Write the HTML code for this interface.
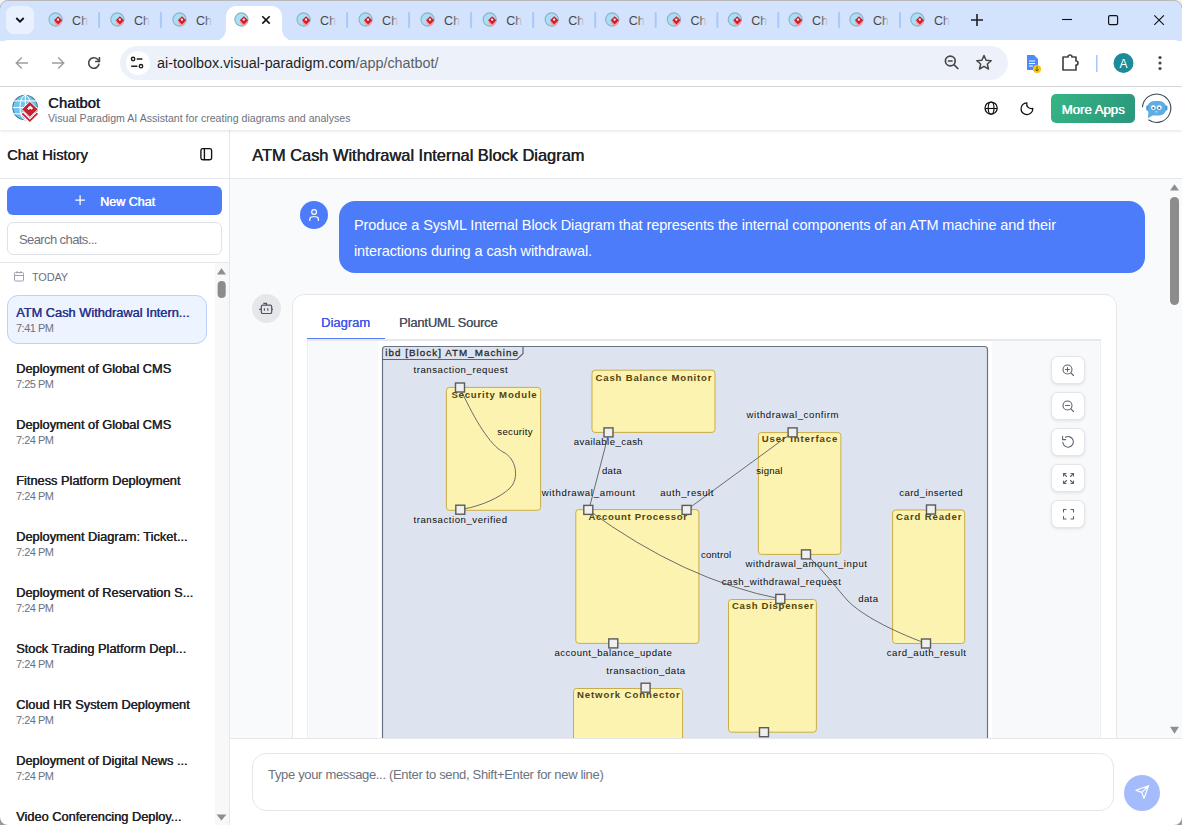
<!DOCTYPE html>
<html><head><meta charset="utf-8">
<style>
*{box-sizing:border-box}
html,body{margin:0;padding:0}
body{width:1182px;height:825px;overflow:hidden;position:relative;font-family:"Liberation Sans",sans-serif;background:#fff;color:#1f2328}
.a{position:absolute}
.tabstrip{left:0;top:0;width:1182px;height:41px;background:#d3e3fd}
.tabtxt{font-size:12px;color:#3c4043;top:14px}
.sep{top:12px;width:2px;height:17px;background:#a8c7fa;border-radius:1px}
.toolbar{left:0;top:40px;width:1182px;height:47px;background:#fff;border-bottom:1px solid #dadce0;border-radius:8px 8px 0 0}
.omni{left:120px;top:46px;width:888px;height:34px;border-radius:17px;background:#edf2fa}
.url{left:157px;top:55px;font-size:14.35px;color:#1f1f1f;letter-spacing:0px}
.apphdr{left:0;top:87px;width:1182px;height:43px;background:#fff;box-shadow:0 1px 3px rgba(0,0,0,.12);z-index:2}
.side{left:0;top:130px;width:230px;height:695px;background:#fff;border-right:1px solid #e5e7eb}
.item{left:16px;font-size:12.8px;color:#1f2328;text-shadow:0.45px 0 0 #1f2328}
.time{left:16px;font-size:11px;color:#6b7280;letter-spacing:-0.5px}
.main{left:230px;top:130px;width:952px;height:695px;background:#f9fafb}
.zbtn{left:1051px;width:34px;height:28px;background:#fff;border:1px solid #e3e5e9;border-radius:7px;box-shadow:0 1px 3px rgba(0,0,0,.1)}
</style></head>
<body>
<!-- TAB STRIP -->
<div class="a tabstrip"></div>
<div class="a" style="left:6px;top:6px;width:28px;height:28px;border-radius:8px;background:#eaf1fe"></div>
<svg class="a" style="left:0;top:0" width="1182" height="41">
  <path d="M16.3 18 L20 21.7 L23.7 18" fill="none" stroke="#111" stroke-width="1.8"/>
</svg>
<svg class="a" style="left:0;top:0" width="1182" height="41"><path d="M214 41 A12 12 0 0 0 226 29 V16 A10 10 0 0 1 236 6 H272 A10 10 0 0 1 282 16 V29 A12 12 0 0 0 294 41 Z" fill="#fff"/></svg>
<!--tabs--><svg class="a" style="left:0;top:0" width="1182" height="41">
<defs><linearGradient id="fade" x1="0" x2="1"><stop offset="0" stop-color="#474747"/><stop offset="0.55" stop-color="#474747"/><stop offset="1" stop-color="#474747" stop-opacity="0"/></linearGradient></defs>
<g transform="translate(55.60,19.5)">
<circle r="6.6" fill="#a8dff6" stroke="#8eb0c0" stroke-width="1.1"/>
<polygon points="2.5,-1 6.6,3.1 2.5,7.2 -1.6,3.1" fill="#f09ea5"/>
<polygon points="2.5,-3.3 6.6,0.8 2.5,4.9 -1.6,0.8" fill="#d21c2c"/>
<circle cx="2.4" cy="0.2" r="1.15" fill="#fff"/>
</g>
<text x="72.1" y="25" font-size="12.5" fill="url(#fade)" font-family="Liberation Sans" textLength="16">Ch</text>
<rect x="98.1" y="12" width="2" height="16" rx="1" fill="#a8c7fa"/>
<g transform="translate(117.40,19.5)">
<circle r="6.6" fill="#a8dff6" stroke="#8eb0c0" stroke-width="1.1"/>
<polygon points="2.5,-1 6.6,3.1 2.5,7.2 -1.6,3.1" fill="#f09ea5"/>
<polygon points="2.5,-3.3 6.6,0.8 2.5,4.9 -1.6,0.8" fill="#d21c2c"/>
<circle cx="2.4" cy="0.2" r="1.15" fill="#fff"/>
</g>
<text x="133.9" y="25" font-size="12.5" fill="url(#fade)" font-family="Liberation Sans" textLength="16">Ch</text>
<rect x="159.9" y="12" width="2" height="16" rx="1" fill="#a8c7fa"/>
<g transform="translate(179.50,19.5)">
<circle r="6.6" fill="#a8dff6" stroke="#8eb0c0" stroke-width="1.1"/>
<polygon points="2.5,-1 6.6,3.1 2.5,7.2 -1.6,3.1" fill="#f09ea5"/>
<polygon points="2.5,-3.3 6.6,0.8 2.5,4.9 -1.6,0.8" fill="#d21c2c"/>
<circle cx="2.4" cy="0.2" r="1.15" fill="#fff"/>
</g>
<text x="196.0" y="25" font-size="12.5" fill="url(#fade)" font-family="Liberation Sans" textLength="16">Ch</text>
<g transform="translate(241.40,19.5)">
<circle r="6.6" fill="#a8dff6" stroke="#8eb0c0" stroke-width="1.1"/>
<polygon points="2.5,-1 6.6,3.1 2.5,7.2 -1.6,3.1" fill="#f09ea5"/>
<polygon points="2.5,-3.3 6.6,0.8 2.5,4.9 -1.6,0.8" fill="#d21c2c"/>
<circle cx="2.4" cy="0.2" r="1.15" fill="#fff"/>
</g>
<path d="M262.3 16.2 L269.7 23.6 M269.7 16.2 L262.3 23.6" stroke="#111" stroke-width="1.6"/>
<g transform="translate(303.60,19.5)">
<circle r="6.6" fill="#a8dff6" stroke="#8eb0c0" stroke-width="1.1"/>
<polygon points="2.5,-1 6.6,3.1 2.5,7.2 -1.6,3.1" fill="#f09ea5"/>
<polygon points="2.5,-3.3 6.6,0.8 2.5,4.9 -1.6,0.8" fill="#d21c2c"/>
<circle cx="2.4" cy="0.2" r="1.15" fill="#fff"/>
</g>
<text x="320.1" y="25" font-size="12.5" fill="url(#fade)" font-family="Liberation Sans" textLength="16">Ch</text>
<rect x="346.1" y="12" width="2" height="16" rx="1" fill="#a8c7fa"/>
<g transform="translate(365.60,19.5)">
<circle r="6.6" fill="#a8dff6" stroke="#8eb0c0" stroke-width="1.1"/>
<polygon points="2.5,-1 6.6,3.1 2.5,7.2 -1.6,3.1" fill="#f09ea5"/>
<polygon points="2.5,-3.3 6.6,0.8 2.5,4.9 -1.6,0.8" fill="#d21c2c"/>
<circle cx="2.4" cy="0.2" r="1.15" fill="#fff"/>
</g>
<text x="382.1" y="25" font-size="12.5" fill="url(#fade)" font-family="Liberation Sans" textLength="16">Ch</text>
<rect x="408.1" y="12" width="2" height="16" rx="1" fill="#a8c7fa"/>
<g transform="translate(427.60,19.5)">
<circle r="6.6" fill="#a8dff6" stroke="#8eb0c0" stroke-width="1.1"/>
<polygon points="2.5,-1 6.6,3.1 2.5,7.2 -1.6,3.1" fill="#f09ea5"/>
<polygon points="2.5,-3.3 6.6,0.8 2.5,4.9 -1.6,0.8" fill="#d21c2c"/>
<circle cx="2.4" cy="0.2" r="1.15" fill="#fff"/>
</g>
<text x="444.1" y="25" font-size="12.5" fill="url(#fade)" font-family="Liberation Sans" textLength="16">Ch</text>
<rect x="470.1" y="12" width="2" height="16" rx="1" fill="#a8c7fa"/>
<g transform="translate(489.70,19.5)">
<circle r="6.6" fill="#a8dff6" stroke="#8eb0c0" stroke-width="1.1"/>
<polygon points="2.5,-1 6.6,3.1 2.5,7.2 -1.6,3.1" fill="#f09ea5"/>
<polygon points="2.5,-3.3 6.6,0.8 2.5,4.9 -1.6,0.8" fill="#d21c2c"/>
<circle cx="2.4" cy="0.2" r="1.15" fill="#fff"/>
</g>
<text x="506.2" y="25" font-size="12.5" fill="url(#fade)" font-family="Liberation Sans" textLength="16">Ch</text>
<rect x="532.2" y="12" width="2" height="16" rx="1" fill="#a8c7fa"/>
<g transform="translate(551.70,19.5)">
<circle r="6.6" fill="#a8dff6" stroke="#8eb0c0" stroke-width="1.1"/>
<polygon points="2.5,-1 6.6,3.1 2.5,7.2 -1.6,3.1" fill="#f09ea5"/>
<polygon points="2.5,-3.3 6.6,0.8 2.5,4.9 -1.6,0.8" fill="#d21c2c"/>
<circle cx="2.4" cy="0.2" r="1.15" fill="#fff"/>
</g>
<text x="568.2" y="25" font-size="12.5" fill="url(#fade)" font-family="Liberation Sans" textLength="16">Ch</text>
<rect x="594.2" y="12" width="2" height="16" rx="1" fill="#a8c7fa"/>
<g transform="translate(612.20,19.5)">
<circle r="6.6" fill="#a8dff6" stroke="#8eb0c0" stroke-width="1.1"/>
<polygon points="2.5,-1 6.6,3.1 2.5,7.2 -1.6,3.1" fill="#f09ea5"/>
<polygon points="2.5,-3.3 6.6,0.8 2.5,4.9 -1.6,0.8" fill="#d21c2c"/>
<circle cx="2.4" cy="0.2" r="1.15" fill="#fff"/>
</g>
<text x="628.7" y="25" font-size="12.5" fill="url(#fade)" font-family="Liberation Sans" textLength="16">Ch</text>
<rect x="654.7" y="12" width="2" height="16" rx="1" fill="#a8c7fa"/>
<g transform="translate(673.90,19.5)">
<circle r="6.6" fill="#a8dff6" stroke="#8eb0c0" stroke-width="1.1"/>
<polygon points="2.5,-1 6.6,3.1 2.5,7.2 -1.6,3.1" fill="#f09ea5"/>
<polygon points="2.5,-3.3 6.6,0.8 2.5,4.9 -1.6,0.8" fill="#d21c2c"/>
<circle cx="2.4" cy="0.2" r="1.15" fill="#fff"/>
</g>
<text x="690.4" y="25" font-size="12.5" fill="url(#fade)" font-family="Liberation Sans" textLength="16">Ch</text>
<rect x="716.4" y="12" width="2" height="16" rx="1" fill="#a8c7fa"/>
<g transform="translate(734.80,19.5)">
<circle r="6.6" fill="#a8dff6" stroke="#8eb0c0" stroke-width="1.1"/>
<polygon points="2.5,-1 6.6,3.1 2.5,7.2 -1.6,3.1" fill="#f09ea5"/>
<polygon points="2.5,-3.3 6.6,0.8 2.5,4.9 -1.6,0.8" fill="#d21c2c"/>
<circle cx="2.4" cy="0.2" r="1.15" fill="#fff"/>
</g>
<text x="751.3" y="25" font-size="12.5" fill="url(#fade)" font-family="Liberation Sans" textLength="16">Ch</text>
<rect x="777.3" y="12" width="2" height="16" rx="1" fill="#a8c7fa"/>
<g transform="translate(795.60,19.5)">
<circle r="6.6" fill="#a8dff6" stroke="#8eb0c0" stroke-width="1.1"/>
<polygon points="2.5,-1 6.6,3.1 2.5,7.2 -1.6,3.1" fill="#f09ea5"/>
<polygon points="2.5,-3.3 6.6,0.8 2.5,4.9 -1.6,0.8" fill="#d21c2c"/>
<circle cx="2.4" cy="0.2" r="1.15" fill="#fff"/>
</g>
<text x="812.1" y="25" font-size="12.5" fill="url(#fade)" font-family="Liberation Sans" textLength="16">Ch</text>
<rect x="838.1" y="12" width="2" height="16" rx="1" fill="#a8c7fa"/>
<g transform="translate(856.50,19.5)">
<circle r="6.6" fill="#a8dff6" stroke="#8eb0c0" stroke-width="1.1"/>
<polygon points="2.5,-1 6.6,3.1 2.5,7.2 -1.6,3.1" fill="#f09ea5"/>
<polygon points="2.5,-3.3 6.6,0.8 2.5,4.9 -1.6,0.8" fill="#d21c2c"/>
<circle cx="2.4" cy="0.2" r="1.15" fill="#fff"/>
</g>
<text x="873.0" y="25" font-size="12.5" fill="url(#fade)" font-family="Liberation Sans" textLength="16">Ch</text>
<rect x="899.0" y="12" width="2" height="16" rx="1" fill="#a8c7fa"/>
<g transform="translate(917.40,19.5)">
<circle r="6.6" fill="#a8dff6" stroke="#8eb0c0" stroke-width="1.1"/>
<polygon points="2.5,-1 6.6,3.1 2.5,7.2 -1.6,3.1" fill="#f09ea5"/>
<polygon points="2.5,-3.3 6.6,0.8 2.5,4.9 -1.6,0.8" fill="#d21c2c"/>
<circle cx="2.4" cy="0.2" r="1.15" fill="#fff"/>
</g>
<text x="933.9" y="25" font-size="12.5" fill="url(#fade)" font-family="Liberation Sans" textLength="16">Ch</text>
</svg><!--/tabs-->
<!-- TOOLBAR -->
<div class="a toolbar"></div>
<div class="a omni"></div>
<div class="a" style="left:126px;top:51px;width:24px;height:24px;border-radius:12px;background:#fff"></div>
<div class="a url">ai-toolbox.visual-paradigm.com<span style="color:#5b5f63">/app/chatbot/</span></div>
<svg class="a" style="left:0;top:40px" width="1182" height="46">
  <!-- back -->
  <path d="M28 23 H16.5 M21.8 17.5 L16.3 23 L21.8 28.5" fill="none" stroke="#9aa0a6" stroke-width="1.5"/>
  <!-- forward -->
  <path d="M52 23 H63.5 M58.2 17.5 L63.7 23 L58.2 28.5" fill="none" stroke="#9aa0a6" stroke-width="1.5"/>
  <!-- reload -->
  <path d="M99.1 23.7 A5.25 5.25 0 1 1 97.6 19.3 L99.2 21.2" fill="none" stroke="#474747" stroke-width="1.6"/>
  <path d="M99.4 17 V21.5 H95.1" fill="none" stroke="#474747" stroke-width="1.6"/>
  <!-- site info -->
  <path d="M136.7 19 H142.4 M131.2 26.2 H137.4" stroke="#1f1f1f" stroke-width="1.6"/>
  <circle cx="133.1" cy="19" r="1.7" fill="none" stroke="#1f1f1f" stroke-width="1.4"/>
  <circle cx="141" cy="26.2" r="1.7" fill="none" stroke="#1f1f1f" stroke-width="1.4"/>
  <!-- zoom -->
  <circle cx="950.3" cy="21" r="4.9" fill="none" stroke="#474747" stroke-width="1.7"/>
  <path d="M953.9 24.6 L958.3 29 M947.9 21 H952.7" stroke="#474747" stroke-width="1.7"/>
  <!-- star -->
  <path d="M984 15.5 L986.1 20.3 L991.2 20.7 L987.3 24 L988.5 29 L984 26.4 L979.5 29 L980.7 24 L976.8 20.7 L981.9 20.3 Z" fill="none" stroke="#474747" stroke-width="1.5" stroke-linejoin="round"/>
  <!-- doc ext -->
  <path d="M1027 15 H1034 L1038 19 V30 H1027 Z" fill="#4c8bf5"/>
  <path d="M1029 21 H1035 M1029 23.5 H1035 M1029 26 H1033" stroke="#fff" stroke-width="1"/>
  <circle cx="1037" cy="29" r="4" fill="#f9c513"/>
  <path d="M1037 26.5 V31 M1035.3 29.5 L1037 31 L1038.7 29.5" stroke="#5b4a00" stroke-width="0.9" fill="none"/>
  <!-- puzzle -->
  <path d="M1063 17 H1068 A2 2 0 0 1 1072 17 H1076 V21 A2 2 0 0 1 1076 25 V30 H1063 Z" fill="none" stroke="#474747" stroke-width="1.7" stroke-linejoin="round"/>
  <rect x="1096" y="15" width="1.5" height="17" fill="#a8c7fa"/>
  <!-- avatar -->
  <circle cx="1123.5" cy="23" r="10" fill="#1b8a99"/>
  <text x="1123.5" y="27.5" font-size="12" fill="#fff" text-anchor="middle" font-family="Liberation Sans">A</text>
  <!-- kebab -->
  <circle cx="1160" cy="17.5" r="1.6" fill="#474747"/><circle cx="1160" cy="23" r="1.6" fill="#474747"/><circle cx="1160" cy="28.5" r="1.6" fill="#474747"/>
</svg>
<!-- window controls / new tab -->
<svg class="a" style="left:0;top:0" width="1182" height="41">
  <path d="M971 20 H983 M977 14 V26" stroke="#1f1f1f" stroke-width="1.6"/>
  <path d="M1062 19.5 H1072" stroke="#111" stroke-width="1.1"/>
  <rect x="1108.6" y="15.6" width="9" height="9" rx="1.4" fill="none" stroke="#111" stroke-width="1.15"/>
  <path d="M1154.3 15.3 L1163.9 24.9 M1163.9 15.3 L1154.3 24.9" stroke="#111" stroke-width="1.1"/>
</svg>

<!-- APP HEADER -->
<div class="a apphdr"></div>
<svg class="a" style="left:10px;top:92px;z-index:3" width="32" height="32" viewBox="0 0 32 32">
  <circle cx="15.1" cy="15.5" r="12.3" fill="#74c3ee" stroke="#4d7d8d" stroke-width="1.1"/>
  <path d="M3.5 8.9 H26.7 M2.8 15.5 H27.4 M3.5 21.8 H26.7 M15.3 3.2 V27.8" stroke="#fff" stroke-width="1"/>
  <ellipse cx="15.3" cy="15.5" rx="5.3" ry="12.3" fill="none" stroke="#fff" stroke-width="1"/>
  <polyline points="11.6,20.6 19.8,28.8 28.1,20.6" fill="none" stroke="#fff" stroke-width="3.4"/>
  <polyline points="12.3,21.3 19.8,28.8 27.4,21.3" fill="none" stroke="#c8202e" stroke-width="1.8"/>
  <polygon points="19.8,9.4 28.1,17.3 19.8,25.2 11.7,17.3" fill="#c8202e" stroke="#fff" stroke-width="0.9"/>
  <polygon points="17.1,16.5 20.2,13.4 23.1,16.3 21.5,17.8 20.2,16.5 18.6,18.0" fill="#fff"/>
</svg>
<div class="a" style="left:48px;top:95px;font-size:14.8px;color:#1a2033;text-shadow:0.55px 0 0 #1a2033;z-index:3">Chatbot</div>
<div class="a" style="left:48px;top:112px;font-size:10.6px;color:#6b7280;z-index:3">Visual Paradigm AI Assistant for creating diagrams and analyses</div>
<svg class="a" style="left:0;top:87px;z-index:3" width="1182" height="43">
  <!-- globe -->
  <circle cx="991.1" cy="21.1" r="6.1" fill="none" stroke="#111" stroke-width="1.25"/>
  <ellipse cx="991.1" cy="21.1" rx="2.9" ry="6.1" fill="none" stroke="#111" stroke-width="1.15"/>
  <path d="M985 21.5 H997.2" stroke="#111" stroke-width="1.1"/>
  <!-- moon -->
  <path d="M1026.8 15.8 A5.9 5.9 0 1 0 1032.8 21.4 A4.7 4.7 0 0 1 1026.8 15.8 Z" fill="none" stroke="#111" stroke-width="1.3" stroke-linejoin="round"/>
</svg>
<div class="a" style="left:1051px;top:94px;width:84px;height:29px;border-radius:5px;background:linear-gradient(120deg,#36b583,#2a967e);color:#fff;font-size:13.2px;text-align:center;line-height:29px;padding-top:1px;z-index:3;text-shadow:0.5px 0 0 #fff">More Apps</div>
<svg class="a" style="left:1141px;top:93px;z-index:3" width="31" height="31" viewBox="0 0 31 31">
  <path d="M1.45 14.2 A14.2 14.2 0 1 1 7.45 26.8" fill="none" stroke="#3a4656" stroke-width="1.1"/>
  <path d="M7.5 19 L6.8 25.2 L12.5 22 Z" fill="#5eaee6"/>
  <rect x="6.2" y="8" width="19.1" height="14.5" rx="7" fill="#5eaee6"/>
  <rect x="5.2" y="12.5" width="2.2" height="5" rx="1" fill="#4f97cf"/><rect x="24.2" y="12.5" width="2.2" height="5" rx="1" fill="#4f97cf"/>
  <circle cx="12.4" cy="14.6" r="2.4" fill="#fff"/><circle cx="18.3" cy="14.6" r="2.4" fill="#fff"/>
  <circle cx="12.4" cy="15" r="1.1" fill="#5a6470"/><circle cx="18.3" cy="15" r="1.1" fill="#5a6470"/>
  <ellipse cx="15.4" cy="18.8" rx="1.3" ry="0.6" fill="#cfe7fa"/>
</svg>

<!-- SIDEBAR -->
<div class="a side"></div>
<div class="a" style="left:7px;top:147px;font-size:14.7px;color:#1f2328;text-shadow:0.4px 0 0 #1f2328">Chat History</div>
<svg class="a" style="left:199px;top:147px" width="16" height="16">
  <rect x="1.9" y="1.6" width="10.7" height="11.1" rx="1.8" fill="none" stroke="#111" stroke-width="1.35"/>
  <path d="M5.4 1.6 V12.7" stroke="#111" stroke-width="1.35"/>
</svg>
<div class="a" style="left:0;top:178px;width:229px;height:1px;background:#e5e7eb"></div>
<div class="a" style="left:7px;top:186px;width:215px;height:29px;border-radius:6px;background:#4d7cfb;color:#fff;font-size:12.5px;line-height:29px;padding-left:93px;padding-top:2px;text-shadow:0.5px 0 0 #fff">New Chat</div>
<svg class="a" style="left:73px;top:194px" width="14" height="14"><path d="M7.1 1.3 V10.9 M2.3 6.1 H11.9" stroke="#fff" stroke-width="1.25"/></svg>
<div class="a" style="left:7px;top:222px;width:215px;height:33px;border-radius:6px;border:1px solid #dfe2e6;background:#fff"></div>
<div class="a" style="left:19px;top:232px;font-size:13px;color:#6b7280;letter-spacing:-0.6px">Search chats...</div>
<div class="a" style="left:0;top:262px;width:229px;height:1px;background:#e5e7eb"></div>
<svg class="a" style="left:13px;top:270px" width="13" height="13">
  <rect x="1.5" y="2.5" width="9" height="8.5" rx="1" fill="none" stroke="#9ca3af" stroke-width="1"/>
  <path d="M1.5 5.5 H10.5 M4 1 V3.5 M8 1 V3.5" stroke="#9ca3af" stroke-width="1"/>
</svg>
<div class="a" style="left:32px;top:271px;font-size:11px;color:#6b7280;letter-spacing:-0.2px">TODAY</div>
<!-- sidebar scrollbar -->
<div class="a" style="left:215px;top:263px;width:14px;height:562px;background:#f8f8f8"></div>
<svg class="a" style="left:215px;top:263px" width="14" height="562">
  <path d="M2 11.5 L6.5 5.2 L11 11.5 Z" fill="#8f8f8f"/>
  <rect x="2.6" y="17.9" width="8.1" height="17" rx="4" fill="#8c8c8c"/>
  <path d="M1.5 551.4 L11.4 551.4 L6.45 557.5 Z" fill="#8f8f8f"/>
</svg>
<div class="a" style="left:7px;top:295px;width:200px;height:49px;border-radius:11px;background:#eef4ff;border:1px solid #bcd1fb"></div>
<div class="a item" style="top:305px;color:#28358e;text-shadow:0.45px 0 0 #28358e">ATM Cash Withdrawal Intern...</div>
<div class="a time" style="top:322px">7:41 PM</div>
<!--items--><div class="a item" style="top:360.5px">Deployment of Global CMS</div>
<div class="a time" style="top:378.0px">7:25 PM</div>
<div class="a item" style="top:416.5px">Deployment of Global CMS</div>
<div class="a time" style="top:434.0px">7:24 PM</div>
<div class="a item" style="top:472.5px">Fitness Platform Deployment</div>
<div class="a time" style="top:490.0px">7:24 PM</div>
<div class="a item" style="top:528.5px">Deployment Diagram: Ticket...</div>
<div class="a time" style="top:546.0px">7:24 PM</div>
<div class="a item" style="top:584.5px">Deployment of Reservation S...</div>
<div class="a time" style="top:602.0px">7:24 PM</div>
<div class="a item" style="top:640.5px">Stock Trading Platform Depl...</div>
<div class="a time" style="top:658.0px">7:24 PM</div>
<div class="a item" style="top:696.5px">Cloud HR System Deployment</div>
<div class="a time" style="top:714.0px">7:24 PM</div>
<div class="a item" style="top:752.5px">Deployment of Digital News ...</div>
<div class="a time" style="top:770.0px">7:24 PM</div>
<div class="a item" style="top:808.5px">Video Conferencing Deploy...</div>
<div class="a time" style="top:826.0px">7:24 PM</div><!--/items-->

<!-- MAIN -->
<div class="a main"></div>
<div class="a" style="left:230px;top:130px;width:952px;height:49px;background:#fff;border-bottom:1px solid #e5e7eb"></div>
<div class="a" style="left:252px;top:146px;font-size:16.4px;color:#1f2328;text-shadow:0.5px 0 0 #1f2328">ATM Cash Withdrawal Internal Block Diagram</div>
<!-- user msg -->
<div class="a" style="left:300px;top:201px;width:28px;height:28px;border-radius:50%;background:#4d7cfb"></div>
<svg class="a" style="left:299px;top:201px" width="29" height="29">
  <circle cx="15.1" cy="11" r="2.4" fill="none" stroke="#fff" stroke-width="1.15"/>
  <path d="M10.8 19.9 V18.4 Q10.8 15.7 13.6 15.7 H16.6 Q19.4 15.7 19.4 18.4 V19.9" fill="none" stroke="#fff" stroke-width="1.15"/>
</svg>
<div class="a" style="left:339px;top:201px;width:806px;height:72px;border-radius:16px;background:#4d7cfb"></div>
<div class="a" style="left:354px;top:212px;width:750px;font-size:14.5px;line-height:26px;color:#fff;letter-spacing:-0.1px">Produce a SysML Internal Block Diagram that represents the internal components of an ATM machine and their interactions during a cash withdrawal.</div>
<!-- bot avatar -->
<div class="a" style="left:252px;top:294px;width:29px;height:29px;border-radius:50%;background:#e5e7eb"></div>
<svg class="a" style="left:252px;top:294px" width="29" height="29">
  <rect x="9.3" y="11.2" width="10.4" height="8.3" rx="1.6" fill="none" stroke="#4b5563" stroke-width="1.2"/>
  <path d="M14.5 11.2 V9.4 H11.3 M7.1 15.4 H9.3 M19.7 15.4 H20.9 M12.4 14.2 V16.7 M15.8 14.2 V16.7" fill="none" stroke="#4b5563" stroke-width="1.15"/>
</svg>
<!-- card -->
<div class="a" style="left:292px;top:294px;width:825px;height:520px;border-radius:12px;background:#fff;border:1px solid #e5e7eb"></div>
<div class="a" style="left:321px;top:315px;font-size:13px;color:#4257ee;text-shadow:0.3px 0 0 #4257ee">Diagram</div>
<div class="a" style="left:399px;top:315px;font-size:13px;color:#4b5563;letter-spacing:-0.2px;text-shadow:0.3px 0 0 #4b5563">PlantUML Source</div>
<div class="a" style="left:307px;top:339px;width:794px;height:2px;background:#e6e8eb"></div>
<div class="a" style="left:307px;top:337.6px;width:78px;height:1.4px;background:#5a7cf5"></div>
<div class="a" style="left:307px;top:341px;width:794px;height:400px;background:#f8f9fb;border-left:1px solid #eceef1;border-right:1px solid #eceef1"></div>
<!--diagram--><svg class="a" style="left:308px;top:340px" width="793" height="398" viewBox="308 340 793 398">
<g font-family="Liberation Sans">
<rect x="378" y="341" width="613.8" height="400" fill="#fff"/>
<path d="M382.5 900 V349.5 Q382.5 346.5 385.5 346.5 H984.5 Q987.5 346.5 987.5 349.5 V900 Z" fill="#dee4ef" stroke="#6a7384" stroke-width="1.2"/>
<path d="M382.5 359.5 H517 L523 353.5 V346.5" fill="none" stroke="#5f6673" stroke-width="1.2"/>
<text x="385.2" y="356.3" font-size="9.8" fill="#2a2a2a" stroke="#2a2a2a" stroke-width="0.3" textLength="132.8" lengthAdjust="spacing">ibd [Block] ATM_Machine</text>
<rect x="446.4" y="387.4" width="94.2" height="122.9" rx="3" fill="#fcf3b0" stroke="#c9ad47" stroke-width="1"/>
<rect x="592.0" y="370.2" width="123.0" height="62.2" rx="3" fill="#fcf3b0" stroke="#c9ad47" stroke-width="1"/>
<rect x="575.8" y="509.6" width="123.1" height="133.8" rx="3" fill="#fcf3b0" stroke="#c9ad47" stroke-width="1"/>
<rect x="758.4" y="432.6" width="82.5" height="121.8" rx="3" fill="#fcf3b0" stroke="#c9ad47" stroke-width="1"/>
<rect x="892.6" y="510.0" width="72.1" height="133.5" rx="3" fill="#fcf3b0" stroke="#c9ad47" stroke-width="1"/>
<rect x="573.5" y="688.5" width="109.1" height="111.5" rx="3" fill="#fcf3b0" stroke="#c9ad47" stroke-width="1"/>
<rect x="728.5" y="599.5" width="87.9" height="132.7" rx="3" fill="#fcf3b0" stroke="#c9ad47" stroke-width="1"/>
<g fill="none" stroke="#6b6b6b" stroke-width="1">
<path d="M461.8 391.8 C475 420, 490 445, 503 452 C516 458, 520 478, 510 488 C500 498, 480 506, 464.8 508.8"/>
<path d="M608.4 434.8 L589.1 508.8"/>
<path d="M686.6 510 L792.6 432.4"/>
<path d="M588.3 510 Q684 580 780.3 598.9"/>
<path d="M806 554.4 C825 572, 838 590, 848 601 C862 615, 890 630, 926 643.5"/>
</g>
<text x="451.4" y="398.2" font-size="9.6" font-weight="bold" fill="#52430e" textLength="85.3" lengthAdjust="spacing">Security Module</text>
<text x="595.6" y="381.0" font-size="9.6" font-weight="bold" fill="#52430e" textLength="115.8" lengthAdjust="spacing">Cash Balance Monitor</text>
<text x="588.5" y="520.2" font-size="9.6" font-weight="bold" fill="#52430e" textLength="98.4" lengthAdjust="spacing">Account Processor</text>
<text x="761.7" y="442.1" font-size="9.6" font-weight="bold" fill="#52430e" textLength="75.6" lengthAdjust="spacing">User Interface</text>
<text x="896.0" y="520.3" font-size="9.6" font-weight="bold" fill="#52430e" textLength="65.4" lengthAdjust="spacing">Card Reader</text>
<text x="577.0" y="698.4" font-size="9.6" font-weight="bold" fill="#52430e" textLength="102.7" lengthAdjust="spacing">Network Connector</text>
<text x="732.0" y="609.0" font-size="9.6" font-weight="bold" fill="#52430e" textLength="81.5" lengthAdjust="spacing">Cash Dispenser</text>
<text x="413.5" y="372.8" font-size="9.6" fill="#0d0d0d" textLength="94.2" lengthAdjust="spacing">transaction_request</text>
<text x="497.3" y="435.0" font-size="9.6" fill="#0d0d0d" textLength="35.3" lengthAdjust="spacing">security</text>
<text x="413.5" y="522.6" font-size="9.6" fill="#0d0d0d" textLength="93.6" lengthAdjust="spacing">transaction_verified</text>
<text x="573.7" y="444.8" font-size="9.6" fill="#0d0d0d" textLength="69.0" lengthAdjust="spacing">available_cash</text>
<text x="601.9" y="473.8" font-size="9.6" fill="#0d0d0d" textLength="19.8" lengthAdjust="spacing">data</text>
<text x="541.7" y="496.0" font-size="9.6" fill="#0d0d0d" textLength="93.3" lengthAdjust="spacing">withdrawal_amount</text>
<text x="660.2" y="496.0" font-size="9.6" fill="#0d0d0d" textLength="53.3" lengthAdjust="spacing">auth_result</text>
<text x="746.4" y="418.1" font-size="9.6" fill="#0d0d0d" textLength="92.2" lengthAdjust="spacing">withdrawal_confirm</text>
<text x="756.3" y="474.2" font-size="9.6" fill="#0d0d0d" textLength="26.2" lengthAdjust="spacing">signal</text>
<text x="899.2" y="496.0" font-size="9.6" fill="#0d0d0d" textLength="63.5" lengthAdjust="spacing">card_inserted</text>
<text x="700.9" y="557.9" font-size="9.6" fill="#0d0d0d" textLength="30.3" lengthAdjust="spacing">control</text>
<text x="554.5" y="655.9" font-size="9.6" fill="#0d0d0d" textLength="117.3" lengthAdjust="spacing">account_balance_update</text>
<text x="606.3" y="674.0" font-size="9.6" fill="#0d0d0d" textLength="78.9" lengthAdjust="spacing">transaction_data</text>
<text x="721.8" y="585.0" font-size="9.6" fill="#0d0d0d" textLength="119.0" lengthAdjust="spacing">cash_withdrawal_request</text>
<text x="745.4" y="566.9" font-size="9.6" fill="#0d0d0d" textLength="121.6" lengthAdjust="spacing">withdrawal_amount_input</text>
<text x="858.2" y="602.2" font-size="9.6" fill="#0d0d0d" textLength="19.8" lengthAdjust="spacing">data</text>
<text x="886.8" y="656.0" font-size="9.6" fill="#0d0d0d" textLength="79.2" lengthAdjust="spacing">card_auth_result</text>
<rect x="455.5" y="383.0" width="9" height="9" fill="#efefef" stroke="#5a5a5a" stroke-width="1.4"/>
<rect x="455.8" y="505.2" width="9" height="9" fill="#efefef" stroke="#5a5a5a" stroke-width="1.4"/>
<rect x="604.0" y="427.9" width="9" height="9" fill="#efefef" stroke="#5a5a5a" stroke-width="1.4"/>
<rect x="583.8" y="505.4" width="9" height="9" fill="#efefef" stroke="#5a5a5a" stroke-width="1.4"/>
<rect x="682.1" y="505.4" width="9" height="9" fill="#efefef" stroke="#5a5a5a" stroke-width="1.4"/>
<rect x="608.8" y="638.9" width="9" height="9" fill="#efefef" stroke="#5a5a5a" stroke-width="1.4"/>
<rect x="788.1" y="427.9" width="9" height="9" fill="#efefef" stroke="#5a5a5a" stroke-width="1.4"/>
<rect x="801.5" y="549.9" width="9" height="9" fill="#efefef" stroke="#5a5a5a" stroke-width="1.4"/>
<rect x="926.5" y="505.0" width="9" height="9" fill="#efefef" stroke="#5a5a5a" stroke-width="1.4"/>
<rect x="921.5" y="639.0" width="9" height="9" fill="#efefef" stroke="#5a5a5a" stroke-width="1.4"/>
<rect x="641.1" y="683.2" width="9" height="9" fill="#efefef" stroke="#5a5a5a" stroke-width="1.4"/>
<rect x="775.8" y="594.4" width="9" height="9" fill="#efefef" stroke="#5a5a5a" stroke-width="1.4"/>
<rect x="759.5" y="727.7" width="9" height="9" fill="#efefef" stroke="#5a5a5a" stroke-width="1.4"/>
</g></svg><!--/diagram-->
<!-- zoom controls -->
<div class="a zbtn" style="top:356px"></div>
<div class="a zbtn" style="top:392px"></div>
<div class="a zbtn" style="top:428px"></div>
<div class="a zbtn" style="top:464px"></div>
<div class="a zbtn" style="top:500px"></div>
<svg class="a" style="left:1052px;top:356px" width="33" height="172">
  <g fill="none" stroke="#5b6472" stroke-width="1.1" stroke-linecap="round">
    <circle cx="15.5" cy="13.5" r="4.5"/><path d="M18.8 16.8 L21.5 19.5 M13.5 13.5 H17.5 M15.5 11.5 V15.5"/>
    <circle cx="15.5" cy="49.5" r="4.5"/><path d="M18.8 52.8 L21.5 55.5 M13.5 49.5 H17.5"/>
    <path d="M10.8 86.3 A5.3 5.3 0 1 0 13.4 81.3"/><path d="M10.6 80.2 V83.6 H13.7"/>
    <path d="M11.5 117.5 L14.5 120.5 M11.5 117.5 V120 M11.5 117.5 H14 M21.5 117.5 L18.5 120.5 M21.5 117.5 V120 M21.5 117.5 H19 M11.5 127.5 L14.5 124.5 M11.5 127.5 V125 M11.5 127.5 H14 M21.5 127.5 L18.5 124.5 M21.5 127.5 V125 M21.5 127.5 H19"/>
    <path d="M11.5 156 V153.5 H14 M19 153.5 H21.5 V156 M21.5 160.5 V163 H19 M14 163 H11.5 V160.5"/>
  </g>
</svg>

<!-- chat scrollbar -->
<svg class="a" style="left:1166px;top:179px" width="16" height="560">
  <path d="M4 11.4 L8.5 5.2 L13 11.4 Z" fill="#8f8f8f"/>
  <rect x="4" y="18" width="9" height="108" rx="4.5" fill="#8c8c8c"/>
  <path d="M4 547.8 L13 547.8 L8.5 554.7 Z" fill="#8f8f8f"/>
</svg>

<!-- INPUT AREA -->
<div class="a" style="left:230px;top:738px;width:952px;height:87px;background:#fff;border-top:1px solid #e5e7eb"></div>
<div class="a" style="left:252px;top:753px;width:862px;height:58px;border-radius:14px;border:1px solid #e5e7eb;background:#fff"></div>
<div class="a" style="left:268px;top:767px;font-size:13px;color:#6b7280;letter-spacing:-0.33px">Type your message... (Enter to send, Shift+Enter for new line)</div>
<div class="a" style="left:1124px;top:775px;width:36px;height:36px;border-radius:50%;background:#a5bcfc"></div>
<svg class="a" style="left:1124px;top:775px" width="36" height="36">
  <path d="M11.8 15.2 L24.6 10.8 L20 23.4 L17.8 17.4 Z M17.8 17.4 L24.6 10.8" fill="none" stroke="#fff" stroke-width="1.2" stroke-linejoin="round"/>
</svg>
<!-- window frame -->
<svg class="a" style="left:0;top:0;z-index:10" width="1182" height="825">
  <path d="M0 0 H1182 V8 A8 8 0 0 0 1174 0 H8 A8 8 0 0 0 0 8 Z" fill="#f2f2f2"/>
  <path d="M0 8 A8 8 0 0 1 8 0.5 H1174 A8 8 0 0 1 1182 8" fill="none" stroke="#b8b8b8" stroke-width="1"/>
  <path d="M0 817 A8 8 0 0 0 8 825 H0 Z" fill="#9a9a9a"/>
  <path d="M1182 817 A8 8 0 0 1 1174 825 H1182 Z" fill="#9a9a9a"/>
</svg>
</body></html>
